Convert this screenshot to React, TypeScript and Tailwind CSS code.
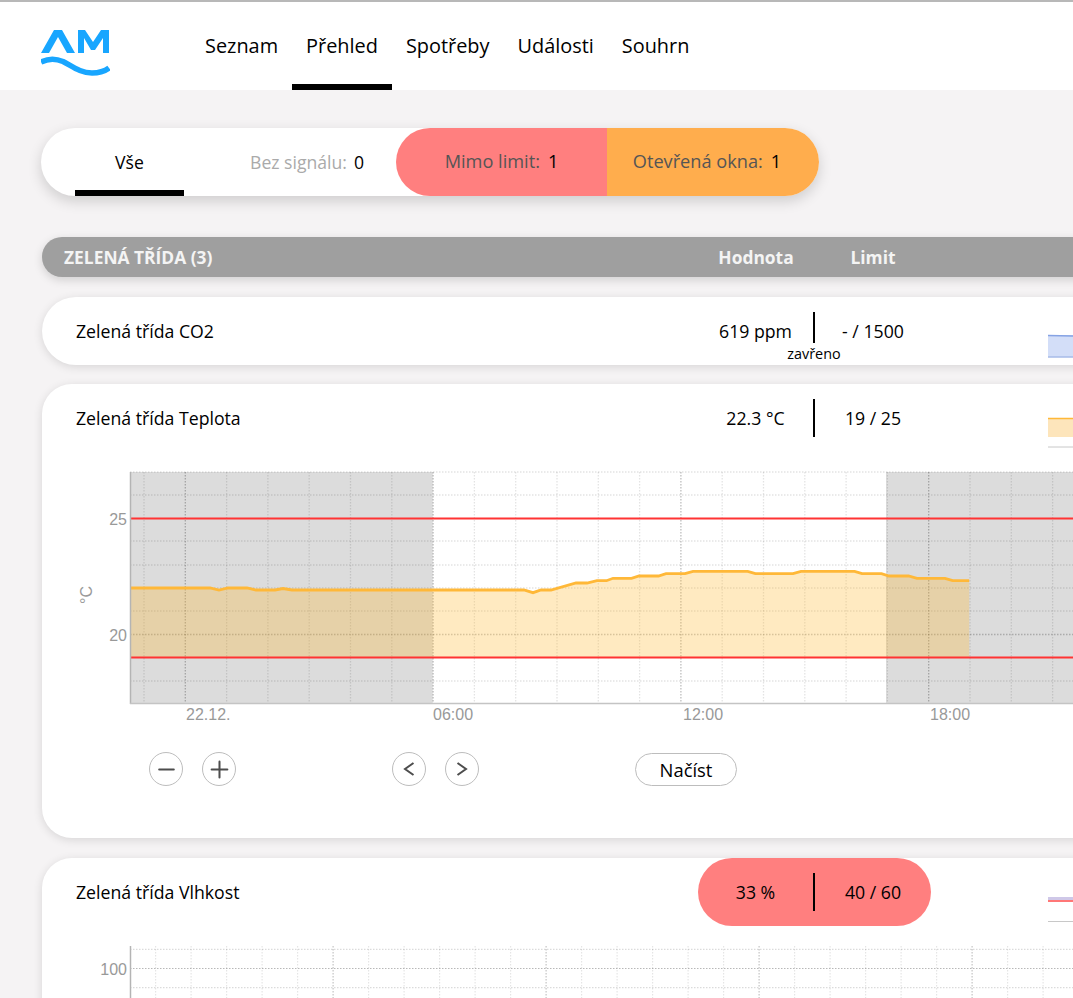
import React from "react";
import { Minus, Plus } from "lucide-react";

const line: [number, number][] = [
  [130, 588], [210, 588], [219, 590], [228, 588], [247, 588], [256, 590], [275, 590], [283, 588.5], [292, 590], [432, 590],
  [524, 590], [533, 592.7], [541, 590], [551, 590], [576, 583], [587, 583], [597, 580.7], [606.5, 580.7], [613, 578.3], [631.5, 578.3],
  [639, 576], [658.5, 576], [666, 573.7], [685, 573.7], [693, 571.3], [747.7, 571.3], [755.4, 573.7], [793, 573.7], [801, 571.3], [854.6, 571.3],
  [862, 573.7], [881.5, 573.7], [889, 576], [908.5, 576], [917, 578.3], [945, 578.3], [952.7, 580.7], [969.2, 580.7],
];
const pts = line.map((p) => p.join(",")).join(" ");
const area = `130,657 ${pts} 969.2,657`;

function TempChart() {
  const verts = Array.from({ length: 23 }, (_, i) => 144 + 41.3 * i);
  const hs = [472, 495, 541, 565, 588, 611, 634.5, 681];
  return (
    <svg className="block mt-[10px] ml-[34px]" width="1000" height="265" viewBox="76 462 1000 265">
      <rect x="130" y="472" width="302.7" height="231.5" fill="#dcdcdc" />
      <rect x="886" y="472" width="190" height="231.5" fill="#dcdcdc" />
      {verts.map((x, i) => (
        <line key={i} x1={x} x2={x} y1="472" y2="703" stroke={i % 6 === 1 ? "rgba(0,0,0,.26)" : "rgba(0,0,0,.11)"} strokeWidth="1.3" strokeDasharray="1.5 1.5" />
      ))}
      {hs.map((y) => (
        <line key={y} x1="130" x2="1076" y1={y} y2={y} stroke={y === 634.5 ? "rgba(0,0,0,.22)" : "rgba(0,0,0,.11)"} strokeWidth="1.3" strokeDasharray="1.5 1.5" />
      ))}
      <polygon points={area} fill="rgba(255,184,51,.3)" />
      <polyline points={pts} fill="none" stroke="#ffb838" strokeWidth="2.8" />
      <line x1="130" x2="1076" y1="518.5" y2="518.5" stroke="#ff3333" strokeWidth="2" />
      <line x1="130" x2="1076" y1="657.5" y2="657.5" stroke="#ff3333" strokeWidth="2" />
      <line x1="130.5" x2="130.5" y1="472" y2="704" stroke="#b4b4b4" strokeWidth="1.5" />
      <line x1="130" x2="1076" y1="703.5" y2="703.5" stroke="#c4c4c4" strokeWidth="1.5" />
      <g fontFamily="'Liberation Sans', Arial, sans-serif" fontSize="16" fill="#999999">
        <text x="127" y="525" textAnchor="end">25</text>
        <text x="127" y="641" textAnchor="end">20</text>
        <text x="186" y="720">22.12.</text>
        <text x="433" y="720">06:00</text>
        <text x="683" y="720">12:00</text>
        <text x="930" y="720">18:00</text>
        <text transform="translate(92 595) rotate(-90)" textAnchor="middle">°C</text>
      </g>
    </svg>
  );
}

function HumidityChart() {
  const verts = Array.from({ length: 27 }, (_, i) => 155.6 + 35.5 * i);
  return (
    <svg className="block mt-[10px] ml-[34px]" width="1000" height="100" viewBox="76 936 1000 100">
      {verts.map((x, i) => (
        <line key={i} x1={x} x2={x} y1="946" y2="1036" stroke={i % 6 === 5 ? "rgba(0,0,0,.24)" : "rgba(0,0,0,.1)"} strokeWidth="1.2" strokeDasharray="1.5 1.5" />
      ))}
      {[949.3, 968.5, 987.7].map((y) => (
        <line key={y} x1="130" x2="1076" y1={y} y2={y} stroke={y === 968.5 ? "rgba(0,0,0,.28)" : "rgba(0,0,0,.14)"} strokeWidth="1.2" strokeDasharray="1.5 1.5" />
      ))}
      <line x1="130.5" x2="130.5" y1="946" y2="1036" stroke="#b4b4b4" strokeWidth="1.5" />
      <text x="127" y="975" textAnchor="end" fontFamily="'Liberation Sans', Arial, sans-serif" fontSize="16" fill="#999999">100</text>
    </svg>
  );
}

function Spark({ kind }: { kind: "co2" | "temp" | "hum" }) {
  return (
    <svg className="block ml-[117px]" width="60" height="68" viewBox="0 0 60 68">
      {kind === "co2" && (
        <>
          <rect x="0" y="38" width="60" height="22" fill="#d3def8" />
          <path d="M0 38.5 L60 39.5" stroke="#86a3e4" strokeWidth="1.5" />
          <path d="M0 60 L60 60" stroke="#a7bbe8" strokeWidth="1.5" />
        </>
      )}
      {kind === "temp" && (
        <>
          <rect x="0" y="34" width="60" height="19" fill="#fde5bb" />
          <path d="M0 34.5 L60 34.5" stroke="#ffb838" strokeWidth="1.5" />
          <path d="M0 63 L60 63" stroke="#c8c8c8" strokeWidth="1" />
        </>
      )}
      {kind === "hum" && (
        <>
          <rect x="0" y="39" width="60" height="3" fill="#cfc8e8" />
          <path d="M0 43 L60 43" stroke="#ff4a4a" strokeWidth="1.5" />
          <path d="M0 63.5 L60 63.5" stroke="#c8c8c8" strokeWidth="1" />
        </>
      )}
    </svg>
  );
}

function Row({ name, value, limit, alert, closed, spark }: { name: string; value: string; limit: string; alert?: boolean; closed?: boolean; spark: "co2" | "temp" | "hum" }) {
  return (
    <div className="flex items-center h-[68px] pl-[34px] text-[17.7px] text-black">
      <div className="w-[622px]">{name}</div>
      <div className={`flex items-center w-[233px] h-[68px] rounded-full ${alert ? "bg-[#ff7f7f]" : ""}`}>
        <div className="w-[115px] text-center">{value}</div>
        <div className={`relative w-[2px] bg-black ${closed ? "h-[31px] -mt-[8px]" : "h-[38px]"}`}>
          {closed && <span className="absolute left-1/2 -translate-x-1/2 top-[31px] text-[14.4px] leading-[22px]">zavřeno</span>}
        </div>
        <div className="w-[116px] text-center">{limit}</div>
      </div>
      <Spark kind={spark} />
    </div>
  );
}

function Round({ children, className }: { children: React.ReactNode; className?: string }) {
  return (
    <button className={`flex items-center justify-center w-[34px] h-[34px] rounded-full border border-[#bdbdbd] bg-white text-[#4d4d4d] ${className ?? ""}`}>
      {children}
    </button>
  );
}

function NavItem({ label, active }: { label: string; active?: boolean }) {
  return (
    <div className={`flex items-center h-[88px] px-[14px] pt-[5px] text-black border-b-[6px] ${active ? "border-black" : "border-transparent"}`}>
      {label}
    </div>
  );
}

export default function App() {
  return (
    <div className="w-[1073px] h-[998px] overflow-hidden bg-[#f5f3f4]" style={{ fontFamily: "'Open Sans', 'Noto Sans', sans-serif" }}>
      <header className="flex h-[90px] bg-white border-t-2 border-[#b8b8b8]">
        <svg className="ml-[41px] mt-[28px] block shrink-0" width="69" height="48" viewBox="41 30 69 48" fill="#18a6ff">
          <polygon points="41,53 54,30 62,30 75,53 67,53 58,37 49,53" />
          <polygon points="78,53 78,30 85,30 93,42 101,30 109,30 109,53 103,53 103,38 95,50 91,50 84,38 84,53" />
          <path d="M41 62 C48 58.5 56 58.5 63 61.5 C72 66 80 73 92 73 C99 73 105 71 109 68" fill="none" stroke="#18a6ff" strokeWidth="5.5" />
        </svg>
        <nav className="flex ml-[81px] text-[19.9px]">
          <NavItem label="Seznam" />
          <NavItem label="Přehled" active />
          <NavItem label="Spotřeby" />
          <NavItem label="Události" />
          <NavItem label="Souhrn" />
        </nav>
      </header>

      <main className="w-[1400px]">
        <div className="flex items-stretch ml-[41px] mt-[38px] w-[778px] h-[68px] rounded-full bg-white shadow-[0_5px_14px_rgba(0,0,0,0.16)] text-[17.6px]">
          <div className="flex items-center justify-center ml-[34px] w-[109px] border-b-[6px] border-black pt-[6px] text-black">Vše</div>
          <div className="flex items-center justify-center w-[212px] pl-[34px] text-[#aaaaaa]">
            Bez signálu:<span className="ml-[7px] text-black">0</span>
          </div>
          <div className="flex items-center justify-center w-[211px] rounded-l-full bg-[#ff7f7f] text-[18.2px] text-[#555555]">
            Mimo limit:<span className="ml-[8px] text-black">1</span>
          </div>
          <div className="flex items-center justify-center w-[212px] pr-[12px] rounded-r-full bg-[#ffad4d] text-[18.2px] text-[#555555]">
            Otevřená okna:<span className="ml-[8px] text-black">1</span>
          </div>
        </div>

        <div className="flex items-center ml-[42px] mt-[41px] h-[40px] rounded-l-full bg-[#9f9f9f] pl-[22px] shadow-[0_3px_10px_rgba(0,0,0,0.15)] text-[17.4px] font-bold text-[#f4f4f4]">
          <div className="w-[634px]">ZELENÁ TŘÍDA (3)</div>
          <div className="w-[116px] text-center">Hodnota</div>
          <div className="w-[118px] text-center">Limit</div>
        </div>

        <div className="ml-[42px] mt-[20px] rounded-l-[34px] bg-white shadow-[0_2px_10px_rgba(0,0,0,0.12)]">
          <Row name="Zelená třída CO2" value="619 ppm" limit="- / 1500" closed spark="co2" />
        </div>

        <div className="ml-[42px] mt-[19px] h-[454px] rounded-l-[30px] bg-white shadow-[0_2px_10px_rgba(0,0,0,0.12)]">
          <Row name="Zelená třída Teplota" value="22.3 °C" limit="19 / 25" spark="temp" />
          <TempChart />
          <div className="flex items-center mt-[25px] ml-[107px]">
            <Round><Minus size={25} strokeWidth={2} /></Round>
            <Round className="ml-[19px]"><Plus size={27} strokeWidth={1.8} /></Round>
            <Round className="ml-[156px]">
              <svg width="12" height="14" viewBox="0 0 12 14" fill="none" stroke="currentColor" strokeWidth="2"><path d="M10.5 1 L2 7 L10.5 13" /></svg>
            </Round>
            <Round className="ml-[19px]">
              <svg width="12" height="14" viewBox="0 0 12 14" fill="none" stroke="currentColor" strokeWidth="2"><path d="M1.5 1 L10 7 L1.5 13" /></svg>
            </Round>
            <button className="ml-[156px] w-[102px] h-[33px] rounded-full border border-[#bdbdbd] bg-white pt-[1px] text-[18.4px] text-black">Načíst</button>
          </div>
        </div>

        <div className="ml-[42px] mt-[20px] h-[300px] rounded-l-[30px] bg-white shadow-[0_2px_10px_rgba(0,0,0,0.12)]">
          <Row name="Zelená třída Vlhkost" value="33 %" limit="40 / 60" alert spark="hum" />
          <HumidityChart />
        </div>
      </main>
    </div>
  );
}
